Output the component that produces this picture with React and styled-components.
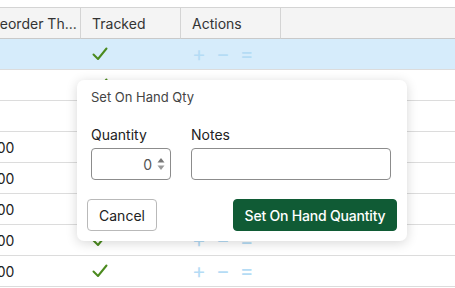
import React from "react";
import styled, { createGlobalStyle } from "styled-components";

const GlobalStyle = createGlobalStyle`
  html, body {
    margin: 0;
    padding: 0;
    background: #fff;
    font-family: Inter, "Open Sans", "Liberation Sans", sans-serif;
    color: #2b2b2b;
  }
`;

const Page = styled.div`
  position: relative;
  width: 455px;
  height: 288px;
  overflow: hidden;
  padding-top: 7px;
  box-sizing: border-box;
`;

const Grid = styled.div`
  margin-left: -20px;
  display: grid;
  grid-template-columns: 101px 100px 100px 174px;
`;

const HeadCell = styled.div`
  height: 30px;
  display: flex;
  align-items: center;
  padding: 0 11px;
  background: #f4f4f4;
  border-top: 1px solid #d4d4d4;
  border-bottom: 1px solid #c9c9c9;
  border-right: ${(p) => (p.$last ? "none" : "1px solid #d4d4d4")};
  font-size: 14px;
  color: #333;
  white-space: nowrap;
  overflow: hidden;
`;

const Cell = styled.div`
  height: 30px;
  display: flex;
  align-items: center;
  padding: 0 11px;
  border-bottom: 1px solid #dcdcdc;
  background: ${(p) => (p.$selected ? "#d6ecfb" : "#fff")};
  font-size: 14px;
  color: #222;
`;

const Actions = styled.div`
  display: flex;
  gap: 10px;
  align-items: center;
  color: #b5dcf5;
  font-size: 21px;
  line-height: 20px;
`;

const Popover = styled.div`
  position: absolute;
  left: 77px;
  top: 80px;
  width: 330px;
  height: 161px;
  box-sizing: border-box;
  background: #fff;
  border-radius: 7px;
  box-shadow: 0 2px 12px rgba(0, 0, 0, 0.16);
  padding: 8px 10px 10px 10px;
  display: flex;
  flex-direction: column;
`;

const Title = styled.div`
  font-size: 13px;
  color: #444;
  padding-left: 4px;
  height: 18px;
  line-height: 18px;
`;

const Fields = styled.div`
  display: flex;
  gap: 20px;
  padding: 0 4px;
  margin-top: 20px;
`;

const Field = styled.div`
  display: flex;
  flex-direction: column;
  gap: 4px;
  width: ${(p) => p.$w}px;
`;

const Label = styled.div`
  font-size: 14px;
  color: #222;
  line-height: 18px;
`;

const InputBox = styled.div`
  height: 32px;
  box-sizing: border-box;
  border: 1px solid #8c8c8c;
  border-radius: 4px;
  display: flex;
  align-items: center;
  justify-content: flex-end;
  padding-right: 5px;
  gap: 5px;
  font-size: 14px;
  color: #555;
`;

const Spinner = styled.svg`
  display: block;
`;

const Buttons = styled.div`
  display: flex;
  justify-content: space-between;
  margin-top: 19px;
`;

const Button = styled.button`
  height: 32px;
  box-sizing: border-box;
  border-radius: 4px;
  font-family: inherit;
  font-size: 14px;
  padding: 0;
  white-space: nowrap;
  letter-spacing: ${(p) => (p.$primary ? "-0.2px" : "0")};
  border: 1px solid ${(p) => (p.$primary ? "#105b35" : "#b9b9b9")};
  background: ${(p) => (p.$primary ? "#105b35" : "#fff")};
  color: ${(p) => (p.$primary ? "#fff" : "#222")};
  font-weight: ${(p) => (p.$primary ? 500 : 400)};
  width: ${(p) => p.$w}px;
`;

function Check() {
  return (
    <svg width="16" height="14" viewBox="0 0 16 14">
      <path d="M1.5 7.5 L6 12 L14.5 1.5" fill="none" stroke="#4b8a1e" strokeWidth="2" strokeLinecap="round" strokeLinejoin="round" />
    </svg>
  );
}

const rows = [
  { val: "", selected: true },
  { val: "" },
  { val: "" },
  { val: "100" },
  { val: "100" },
  { val: "100" },
  { val: "100" },
  { val: "100" },
];

export default function App() {
  return (
    <>
      <GlobalStyle />
      <Page>
        <Grid>
          <HeadCell>Reorder Th...</HeadCell>
          <HeadCell>Tracked</HeadCell>
          <HeadCell>Actions</HeadCell>
          <HeadCell $last />
          {rows.map((r, i) => (
            <React.Fragment key={i}>
              <Cell $selected={r.selected}>{r.val}</Cell>
              <Cell $selected={r.selected}>
                <Check />
              </Cell>
              <Cell $selected={r.selected}>
                <Actions>
                  <span>+</span>
                  <span>−</span>
                  <span>=</span>
                </Actions>
              </Cell>
              <Cell $selected={r.selected} />
            </React.Fragment>
          ))}
        </Grid>
        <Popover>
          <Title>Set On Hand Qty</Title>
          <Fields>
            <Field $w={80}>
              <Label>Quantity</Label>
              <InputBox>
                <span>0</span>
                <Spinner width="8" height="16" viewBox="0 0 8 16">
                  <path d="M4 2 L7.5 6.5 L0.5 6.5 Z" fill="#777" />
                  <path d="M4 14 L7.5 9.5 L0.5 9.5 Z" fill="#999" />
                </Spinner>
              </InputBox>
            </Field>
            <Field $w={200}>
              <Label>Notes</Label>
              <InputBox />
            </Field>
          </Fields>
          <Buttons>
            <Button $w={70}>Cancel</Button>
            <Button $primary $w={164}>Set On Hand Quantity</Button>
          </Buttons>
        </Popover>
      </Page>
    </>
  );
}
